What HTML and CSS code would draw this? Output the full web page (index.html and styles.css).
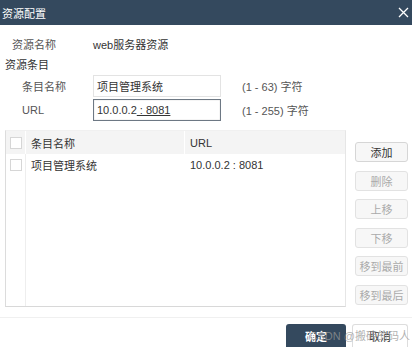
FILE: index.html
```html
<!DOCTYPE html>
<html lang="zh-CN">
<head>
    <meta charset="UTF-8">
    <meta name="viewport" content="width=device-width, initial-scale=1.0">
    <link rel="stylesheet" href="styles.css">
    <title>资源配置</title>
</head>
<body>
    <div class="dialog">
        <div class="header">
            <span class="title">资源配置</span>
            <svg class="close" width="11" height="11" viewBox="0 0 11 11">
                <path d="M1 1 L10 10 M10 1 L1 10" stroke="#fff" stroke-width="1.3" fill="none"/>
            </svg>
        </div>
        <div class="content">
            <div class="row name-row">
                <span class="label">资源名称</span>
                <span class="value">web服务器资源</span>
            </div>
            <div class="section">资源条目</div>
            <div class="row field-row">
                <span class="label">条目名称</span>
                <input class="field" type="text" value="项目管理系统">
                <span class="hint">(1 - 63) 字符</span>
            </div>
            <div class="row field-row">
                <span class="label">URL</span>
                <div class="field focused"><span>10.0.0.2<u>&nbsp;: 8081</u></span></div>
                <span class="hint">(1 - 255) 字符</span>
            </div>
            <div class="list-area">
                <div class="table">
                    <div class="thead">
                        <div class="cell check"><span class="box"></span></div>
                        <div class="cell name">条目名称</div>
                        <div class="cell url">URL</div>
                    </div>
                    <div class="tr">
                        <div class="cell check"><span class="box"></span></div>
                        <div class="cell name">项目管理系统</div>
                        <div class="cell url">10.0.0.2 : 8081</div>
                    </div>
                    <div class="filler">
                        <div class="check"></div>
                    </div>
                </div>
                <div class="actions">
                    <button class="btn">添加</button>
                    <button class="btn disabled">删除</button>
                    <button class="btn disabled">上移</button>
                    <button class="btn disabled">下移</button>
                    <button class="btn disabled">移到最前</button>
                    <button class="btn disabled">移到最后</button>
                </div>
            </div>
        </div>
        <div class="footer">
            <button class="ok">确定</button>
            <button class="cancel">取消</button>
            <span class="watermark">CSDN @搬砖的码人</span>
        </div>
    </div>
</body>
</html>
```

FILE: styles.css
```css
*{
    margin: 0px;
    padding: 0px;
    box-sizing: border-box;
    font-family: "Liberation Sans", "Noto Sans CJK SC", sans-serif;
}

body{
    width: 412px;
    height: 347px;
    overflow: hidden;
    background: #fff;
    color: #333;
    font-size: 11px;
}
.dialog{
    height: 347px;
    display: flex;
    flex-direction: column;
}
.header{
    height: 25px;
    background: #34495e;
    color: #fff;
    display: flex;
    align-items: center;
    justify-content: space-between;
    padding: 0 3px 0 2px;
}
.header .title{
    font-size: 11px;
}
.content{
    padding: 11px 0 0 5px;
}
.row{
    display: flex;
    align-items: center;
}
.row .label{
    color: #555;
}
.name-row{
    height: 16px;
    padding-left: 7px;
}
.name-row .label{
    width: 81px;
}
.name-row .value{
    color: #333;
}
.section{
    margin-top: 5px;
    height: 16px;
    line-height: 16px;
    color: #333;
}
.field-row{
    padding-left: 17px;
    height: 22px;
    margin-top: 2px;
}
.field-row .label{
    width: 71px;
}
.field{
    width: 128px;
    height: 22px;
    border: 1px solid #e3e3e3;
    padding: 0 3px;
    font-size: 11px;
    color: #333;
    outline: none;
    display: flex;
    align-items: center;
}
.field.focused{
    border: 1px solid #6d7884;
    box-shadow: inset 0 0 1px #999;
}
.hint{
    margin-left: 21px;
    color: #555;
}
.list-area{
    display: flex;
    margin-top: 9px;
}
.table{
    width: 341px;
    height: 177px;
    border: 1px solid #e6e6e6;
    border-top-color: #f0f0f0;
    border-left-color: #dcdcdc;
    border-bottom-color: #d8d8d8;
    display: flex;
    flex-direction: column;
}
.thead, .tr{
    display: flex;
    align-items: center;
}
.thead{
    background: #f4f4f4;
    height: 23px;
}
.tr{
    height: 21px;
}
.cell{
    height: 100%;
    display: flex;
    align-items: center;
}
.check{
    width: 20px;
    border-right: 1px solid #eee;
    justify-content: center;
}
.thead .check, .thead .name{
    border-right: 1px solid #fff;
}
.box{
    width: 12px;
    height: 12px;
    border: 1px solid #d6d6d6;
    background: #fff;
}
.name{
    width: 159px;
    padding-left: 5px;
}
.url{
    padding-left: 5px;
}
.filler{
    flex: 1;
    display: flex;
}
.filler .check{
    height: 100%;
}
.actions{
    margin-left: 9px;
    padding-top: 12px;
    display: flex;
    flex-direction: column;
    gap: 8.6px;
}
.btn{
    width: 53px;
    height: 20px;
    border: 1px solid #d6d6d6;
    border-radius: 3px;
    background: #f7f7f7;
    color: #333;
    font-size: 11px;
}
.btn.disabled{
    color: #aaa;
    border-color: #e2e2e2;
}
.footer{
    margin-top: auto;
    border-top: 1px solid #f0f0f0;
    height: 30px;
    display: flex;
    justify-content: flex-end;
    align-items: flex-end;
    padding-right: 4px;
    gap: 6px;
    position: relative;
}
.footer .ok{
    width: 60px;
    height: 23px;
    border: none;
    border-radius: 3px 3px 0 0;
    background: #34495e;
    color: #fff;
    font-size: 11px;
    font-weight: bold;
}
.footer .cancel{
    width: 56px;
    height: 23px;
    border: 1px solid #ddd;
    border-bottom: none;
    border-radius: 3px 3px 0 0;
    background: #fff;
    color: #333;
    font-size: 11px;
}
.watermark{
    position: absolute;
    right: 2px;
    bottom: 4px;
    color: rgba(150, 150, 150, 0.75);
    font-size: 11px;
}
```
